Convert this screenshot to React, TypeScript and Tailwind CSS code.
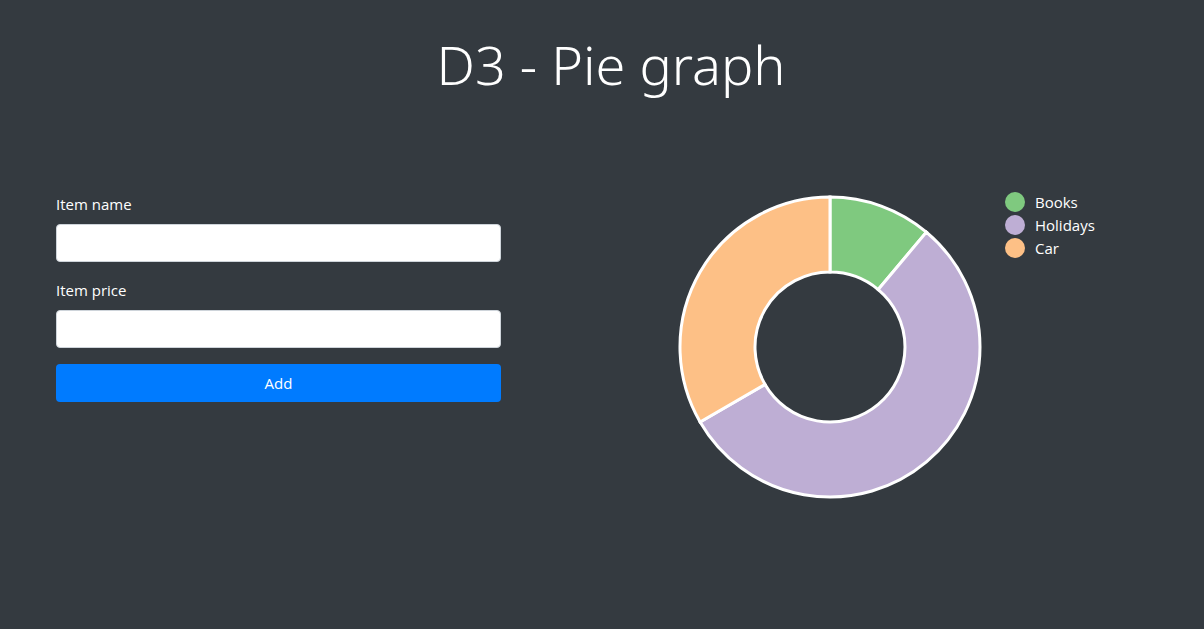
import { useState } from "react";
import type { FormEvent } from "react";

type Item = { name: string; price: number };

const COLORS = ["#7fc97f", "#beaed4", "#fdc086"];
const OUTER = 150;
const INNER = 75;

const START: Item[] = [
  { name: "Books", price: 100 },
  { name: "Holidays", price: 500 },
  { name: "Car", price: 300 },
];

function point(radius: number, turn: number) {
  const angle = turn * 2 * Math.PI;
  return `${radius * Math.sin(angle)} ${-radius * Math.cos(angle)}`;
}

function slicePath(from: number, to: number) {
  const large = to - from > 0.5 ? 1 : 0;
  return `M${point(OUTER, from)}A${OUTER} ${OUTER} 0 ${large} 1 ${point(OUTER, to)}L${point(INNER, to)}A${INNER} ${INNER} 0 ${large} 0 ${point(INNER, from)}Z`;
}

function PieChart({ items }: { items: Item[] }) {
  const total = items.reduce((sum, item) => sum + item.price, 0);
  let sum = 0;
  return (
    <svg
      className="w-[304px] shrink-0"
      viewBox="-152 -152 304 304"
      role="img"
      aria-label="Item prices"
    >
      {items.map((item, i) => {
        const from = sum / total;
        sum += item.price;
        return (
          <path
            key={i}
            d={slicePath(from, sum / total)}
            fill={COLORS[i % COLORS.length]}
            stroke="#fff"
            strokeWidth={3}
          />
        );
      })}
    </svg>
  );
}

function Legend({ items }: { items: Item[] }) {
  return (
    <ul className="flex flex-col gap-[3px]">
      {items.map((item, i) => (
        <li key={i} className="flex h-5 items-center gap-[10px] leading-5">
          <span
            className="size-5 rounded-full"
            style={{ backgroundColor: COLORS[i % COLORS.length] }}
          />
          {item.name}
        </li>
      ))}
    </ul>
  );
}

function Field({
  id,
  label,
  value,
  onChange,
}: {
  id: string;
  label: string;
  value: string;
  onChange: (value: string) => void;
}) {
  return (
    <div className="mb-4 flex flex-col gap-2">
      <label htmlFor={id}>{label}</label>
      <input
        id={id}
        value={value}
        onChange={(e) => onChange(e.target.value)}
        className="h-[38px] rounded border border-[#ced4da] bg-white px-3 text-[#495057]"
      />
    </div>
  );
}

export default function App() {
  const [items, setItems] = useState(START);
  const [name, setName] = useState("");
  const [price, setPrice] = useState("");

  const add = (e: FormEvent) => {
    e.preventDefault();
    const amount = Number(price);
    if (!name || !(amount > 0)) return;
    setItems([...items, { name, price: amount }]);
    setName("");
    setPrice("");
  };

  return (
    <main className="min-h-screen bg-[#343a40] pt-8 pr-[38px] pl-14 font-['Open_Sans',sans-serif] text-[15px] leading-6 text-white">
      <h1 className="text-center font-['Noto_Sans',sans-serif] text-[54px] leading-[64px] font-light">
        D3 - Pie graph
      </h1>
      <div className="mt-24 grid grid-cols-12 gap-x-[30px]">
        <form onSubmit={add} className="col-span-5 flex flex-col">
          <Field id="item-name" label="Item name" value={name} onChange={setName} />
          <Field id="item-price" label="Item price" value={price} onChange={setPrice} />
          <button type="submit" className="h-[38px] rounded bg-[#007bff]">
            Add
          </button>
        </form>
        <div className="col-span-6 col-start-7 flex items-start gap-[23px] pl-[52px]">
          <div className="flex pt-[3px]">
            <PieChart items={items} />
          </div>
          <Legend items={items} />
        </div>
      </div>
    </main>
  );
}
